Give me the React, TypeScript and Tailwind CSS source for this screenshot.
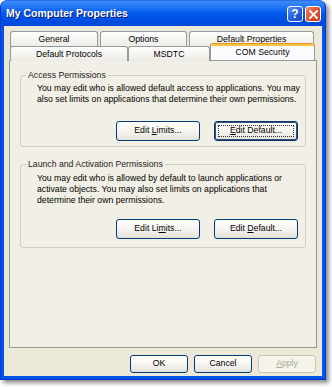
import React from "react";

const FONT = { fontFamily: '"Liberation Sans", Arial, sans-serif' };

function Btn({
  children,
  w,
  def,
  disabled,
}: {
  children: React.ReactNode;
  w: string;
  def?: boolean;
  disabled?: boolean;
}) {
  if (disabled) {
    return (
      <div
        className={`${w} h-full rounded-[3px] border border-[#C9C7BA] bg-[#F5F4EA] flex items-center justify-center text-[8.7px] text-[#ACA899]`}
      >
        {children}
      </div>
    );
  }
  return (
    <div
      className={`${w} h-full rounded-[3px] border border-[#003C74] bg-gradient-to-b from-[#FFFFFF] via-[#F6F5F0] to-[#E3E2DA] flex items-center justify-center text-[8.7px] text-black ${
        def ? "shadow-[inset_0_0_0_1px_#3C4A6E]" : ""
      }`}
    >
      {def ? (
        <div className="w-[calc(100%-6px)] h-[calc(100%-6px)] border border-dotted border-[#333] flex items-center justify-center">
          {children}
        </div>
      ) : (
        children
      )}
    </div>
  );
}

function Tab({
  label,
  w,
  selected,
  h,
}: {
  label: string;
  w: string;
  selected?: boolean;
  h: string;
}) {
  if (selected) {
    return (
      <div
        className={`${w} h-[17px] -mt-[3px] relative z-10 flex flex-col rounded-t-[3px] overflow-hidden border-x border-[#919B9C] bg-[#FCFCFE]`}
      >
        <div className="h-[1px] bg-[#E68B2C]" />
        <div className="h-[2px] bg-[#FFC73C]" />
        <div className="flex-1 flex items-start justify-center pt-[1px] text-[8.7px] text-black leading-[11px]">
          {label}
        </div>
      </div>
    );
  }
  return (
    <div
      className={`${w} ${h} rounded-t-[3px] border border-b-0 border-[#919B9C] bg-gradient-to-b from-[#FFFFFF] to-[#ECEBE5] flex items-start justify-center pt-[2px] text-[8.7px] text-black leading-[11px]`}
    >
      {label}
    </div>
  );
}

function GroupBox({
  title,
  h,
  pt,
  pb,
  lines,
  limitsLabel,
  defaultLabel,
  def,
}: {
  title: string;
  h: string;
  pt: string;
  pb: string;
  lines: string[];
  limitsLabel: React.ReactNode;
  defaultLabel: React.ReactNode;
  def?: boolean;
}) {
  return (
    <div
      className={`relative ${h} border border-[#D0D0BF] rounded-[3px] flex flex-col justify-between ${pt} ${pb} pl-[16px] pr-[7px]`}
    >
      <div className="absolute -top-[6px] left-[5px] px-[2px] bg-[#F2F0E6] text-[8.7px] leading-[11px] text-[#1a1a1a]">
        {title}
      </div>
      <div className="text-[8.7px] leading-[11px] text-black">
        {lines.map((l, i) => (
          <div key={i} className="whitespace-nowrap">
            {l}
          </div>
        ))}
      </div>
      <div className="flex justify-end gap-[14px] h-[20px]">
        <Btn w="w-[84px]">{limitsLabel}</Btn>
        <Btn w="w-[84px]" def={def}>
          {defaultLabel}
        </Btn>
      </div>
    </div>
  );
}

export default function App() {
  return (
    <div className="w-[332px] h-[387px] bg-white" style={FONT}>
      <div className="w-[326px] h-[380px] flex flex-col rounded-t-[7px] overflow-hidden bg-[#0055E5] border border-[#0831D9] border-t-[#2A6BF0] shadow-[3px_3px_4px_rgba(0,0,0,0.45)]">
        {/* Title bar */}
        <div className="h-[25px] flex items-center justify-between pl-[5px] pr-[4px] bg-gradient-to-b from-[#3C8CFB] via-[#0058EE] to-[#0048D8]">
          <div className="text-white font-bold text-[10.5px] [text-shadow:1px_1px_0_#0A1883]">
            My Computer Properties
          </div>
          <div className="flex gap-[2px] pt-[1px]">
            <div className="w-[16px] h-[16px] rounded-[3px] border border-white bg-gradient-to-br from-[#5C8FF3] via-[#2A62E0] to-[#1B48C9] flex items-center justify-center text-white font-bold text-[12px] leading-none">
              ?
            </div>
            <div className="w-[16px] h-[16px] rounded-[3px] border border-white bg-gradient-to-br from-[#F08A6A] via-[#E0552E] to-[#C63A18] flex items-center justify-center">
              <svg width="9" height="9" viewBox="0 0 9 9">
                <path
                  d="M1 1 L8 8 M8 1 L1 8"
                  stroke="white"
                  strokeWidth="1.8"
                  strokeLinecap="square"
                />
              </svg>
            </div>
          </div>
        </div>

        {/* Body */}
        <div className="flex-1 mx-[3px] mb-[3px] bg-[#ECE9D8] flex flex-col pt-[5px] px-[5px]">
          {/* Tabs */}
          <div className="flex gap-[2px] pl-[1px] h-[15px]">
            <Tab label="General" w="w-[88px]" h="h-[16px]" />
            <Tab label="Options" w="w-[87px]" h="h-[16px]" />
            <Tab label="Default Properties" w="w-[125px]" h="h-[16px]" />
          </div>
          <div className="flex pl-[1px] h-[14px] relative z-10">
            <Tab label="Default Protocols" w="w-[118px]" h="h-[15px]" />
            <Tab label="MSDTC" w="w-[82px]" h="h-[15px]" />
            <Tab label="COM Security" selected w="w-[105px]" h="h-[15px]" />
          </div>

          {/* Panel */}
          <div className="h-[288px] border border-[#919B9C] bg-[#F2F0E6] flex flex-col pt-[14px] px-[10px] gap-[17px]">
            <GroupBox
              title="Access Permissions"
              h="h-[72px]"
              pt="pt-[7px]"
              pb="pb-[5px]"
              lines={[
                "You may edit who is allowed default access to applications. You may",
                "also set limits on applications that determine their own permissions.",
              ]}
              limitsLabel={
                <span>
                  Edit <u>L</u>imits...
                </span>
              }
              defaultLabel={
                <span>
                  <u>E</u>dit Default...
                </span>
              }
              def
            />
            <GroupBox
              title="Launch and Activation Permissions"
              h="h-[84px]"
              pt="pt-[8px]"
              pb="pb-[8px]"
              lines={[
                "You may edit who is allowed by default to launch applications or",
                "activate objects. You may also set limits on applications that",
                "determine their own permissions.",
              ]}
              limitsLabel={
                <span>
                  Edit Li<u>m</u>its...
                </span>
              }
              defaultLabel={
                <span>
                  Edit <u>D</u>efault...
                </span>
              }
            />
          </div>

          {/* Bottom buttons */}
          <div className="mt-[7px] h-[18px] flex justify-end gap-[6px] pr-[1px]">
            <Btn w="w-[58px]">OK</Btn>
            <Btn w="w-[58px]">Cancel</Btn>
            <Btn w="w-[58px]" disabled>
              <span>
                <u>A</u>pply
              </span>
            </Btn>
          </div>
        </div>
      </div>
    </div>
  );
}
